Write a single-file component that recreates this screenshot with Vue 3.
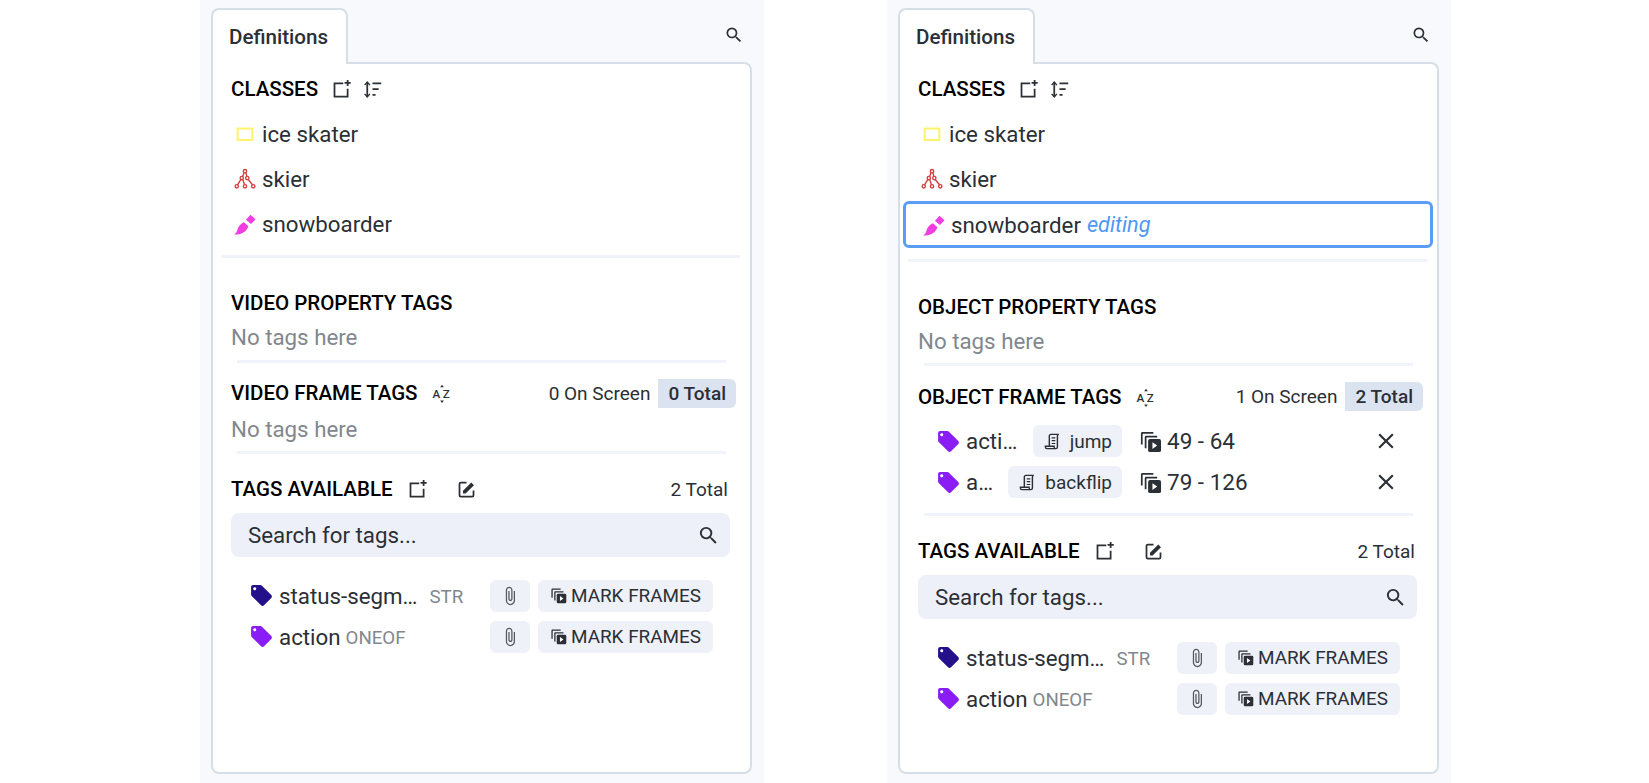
<script setup>
const panels = [
  {
    id: 'video', editing: false, propTitle: 'VIDEO PROPERTY TAGS', frameTitle: 'VIDEO FRAME TAGS',
    onScreen: '0 On Screen', total: '0 Total', frameTags: [],
  },
  {
    id: 'object', editing: true, propTitle: 'OBJECT PROPERTY TAGS', frameTitle: 'OBJECT FRAME TAGS',
    onScreen: '1 On Screen', total: '2 Total',
    frameTags: [
      { name: 'acti…', value: 'jump', range: '49 - 64' },
      { name: 'a…', value: 'backflip', range: '79 - 126' },
    ],
  },
]
const available = [
  { name: 'status-segm…', type: 'STR', color: '#24108a', wide: true },
  { name: 'action', type: 'ONEOF', color: '#8a1cf5', wide: false },
]
const tagPath = 'M21.41 11.58l-9-9C12.05 2.22 11.55 2 11 2H4c-1.1 0-2 .9-2 2v7c0 .55.22 1.05.59 1.42l9 9c.36.36.86.58 1.41.58.55 0 1.05-.22 1.41-.59l7-7c.37-.36.59-.86.59-1.41 0-.55-.23-1.06-.59-1.42zM5.5 7C4.67 7 4 6.33 4 5.5S4.67 4 5.5 4 7 4.67 7 5.5 6.33 7 5.5 7z'
const searchPath = 'M15.5 14h-.79l-.28-.27A6.471 6.471 0 0 0 16 9.5 6.5 6.5 0 1 0 9.5 16c1.61 0 3.09-.59 4.23-1.57l.27.28v.79l5 4.99L20.49 19l-4.99-5zm-6 0C7.01 14 5 11.99 5 9.5S7.01 5 9.5 5 14 7.01 14 9.5 11.99 14 9.5 14z'
const clipPath = 'M16.5 6v11.5c0 2.21-1.79 4-4 4s-4-1.79-4-4V5c0-1.38 1.12-2.5 2.5-2.5s2.5 1.12 2.5 2.5v10.5c0 .55-.45 1-1 1s-1-.45-1-1V6H10v9.5c0 1.38 1.12 2.5 2.5 2.5s2.5-1.12 2.5-2.5V5c0-2.21-1.79-4-4-4S7 2.79 7 5v12.5c0 3.04 2.46 5.5 5.5 5.5s5.5-2.46 5.5-5.5V6h-1.5z'
const closePath = 'M19 6.41L17.59 5 12 10.59 6.41 5 5 6.41 10.59 12 5 17.59 6.41 19 12 13.41 17.59 19 19 17.59 13.41 12z'
</script>

<template>
  <div class="page">
    <section v-for="p in panels" :key="p.id" class="col" :class="'col-' + p.id">
      <div class="tabs">
        <div class="tab">Definitions</div>
        <svg class="top-search" viewBox="0 0 24 24"><path :d="searchPath" /></svg>
      </div>
      <div class="panel">
        <div class="head classes-head">
          <span class="title">CLASSES</span>
          <svg class="ic add" viewBox="0 0 24 24" fill="none" stroke="#2b2f36" stroke-width="2">
            <path d="M14 5H4v15h15V11" /><path d="M19 1v7M15.5 4.5h7" />
          </svg>
          <svg class="ic sort" viewBox="0 0 24 24" fill="none" stroke="#2b2f36" stroke-width="2">
            <path d="M6 4v16" /><path d="M3 7l3-3.5L9 7M3 17l3 3.5L9 17" stroke-width="1.6" /><path d="M12 5h10M12 11.500h7M12 18h3.500" />
          </svg>
        </div>

        <div class="class-row">
          <svg class="cls" viewBox="0 0 24 24" fill="none" stroke="#fdf36b" stroke-width="2.2"><rect x="4" y="6" width="16" height="12.500" /></svg>
          <span>ice skater</span>
        </div>
        <div class="class-row">
          <svg class="cls" viewBox="0 0 24 24" fill="none" stroke="#d2403f" stroke-width="1.500">
            <circle cx="12" cy="3.500" r="1.800" /><circle cx="8.500" cy="11" r="1.800" /><circle cx="14.500" cy="11" r="1.800" />
            <circle cx="3" cy="20" r="1.800" /><circle cx="12" cy="20" r="1.800" /><circle cx="21" cy="20" r="1.800" />
            <path d="M11 5.200L9.300 9.300M13 5.200l1 4M7.500 12.500L3.800 18.300M9.500 12.500l2 5.700M15.500 12.500l4.700 5.800" />
          </svg>
          <span>skier</span>
        </div>
        <div class="class-row" :class="{ editing: p.editing }">
          <svg class="cls" viewBox="0 0 24 24" fill="#f03ee0">
            <path d="M0 23.500c2.500-1.200 3.300-3.300 3.800-5.500.8-3.400 3.500-6.500 7-8l5 4.500c-1.300 4-4.500 7-8.300 8-2.500.7-4.800 1-7.500 1z" />
            <path d="M18 2l5.500 4.700-5 5.300-5.500-4.700z" />
          </svg>
          <span>snowboarder</span>
          <em v-if="p.editing" class="edit-label">editing</em>
        </div>
        <div class="rule rule-wide"></div>

        <div class="head prop-head"><span class="title">{{ p.propTitle }}</span></div>
        <div class="empty first-empty">No tags here</div>
        <div class="rule"></div>

        <div class="head frame-head">
          <span class="title">{{ p.frameTitle }}</span>
          <svg class="ic az" viewBox="0 0 24 24" fill="#2b2f36">
            <text x="0.500" y="17.500" font-size="14" font-weight="500" font-family="Roboto, sans-serif">A</text>
            <text x="13" y="17.500" font-size="14" font-weight="500" font-family="Roboto, sans-serif">Z</text>
            <path d="M12 2l2.200 3h-4.400zM12 24l2.200-3h-4.400z" />
          </svg>
          <span class="spacer"></span>
          <span class="count">{{ p.onScreen }}</span>
          <span class="pill">{{ p.total }}</span>
        </div>

        <div v-if="!p.frameTags.length" class="empty second-empty">No tags here</div>
        <div v-else class="frame-list">
          <div v-for="t in p.frameTags" :key="t.value" class="frame-row">
            <div class="frame-left">
              <svg class="tag" viewBox="0 0 24 24" fill="#8a1cf5"><path :d="tagPath" /></svg>
              <span class="name">{{ t.name }}</span>
              <span class="chip">
                <svg class="ic scroll" viewBox="0 0 24 24" fill="none" stroke="#2b2f36" stroke-width="1.800">
                  <path d="M8 19V5c0-1 .7-2 2-2h10c-1 0-1.800 1-1.800 2v14c0 1.200-.8 2-2 2H5c-1.200 0-2-.8-2-2v-1h11v1c0 1.200.8 2 2 2" />
                  <path d="M11 7.500h4.500M11 11h4.500M11 14.500h4.500" stroke-width="1.500" />
                </svg>
                {{ t.value }}
              </span>
            </div>
            <svg class="frames big" viewBox="0 0 24 24">
              <path d="M2 15V3.500C2 2.700 2.700 2 3.500 2H15v1.800H3.800V15zM6 19V7.500C6 6.700 6.700 6 7.500 6H19v1.800H7.800V19z" fill="#2b2f36" />
              <rect x="9.500" y="9.500" width="13.500" height="13.500" rx="2" fill="#2b2f36" /><path d="M14 12.700l5 3.600-5 3.600z" fill="#fff" />
            </svg>
            <span class="range">{{ t.range }}</span>
            <svg class="close" viewBox="0 0 24 24"><path :d="closePath" /></svg>
          </div>
        </div>
        <div class="rule" :class="{ 'rule-tags': p.frameTags.length }"></div>

        <div class="head avail-head">
          <span class="title">TAGS AVAILABLE</span>
          <svg class="ic add" viewBox="0 0 24 24" fill="none" stroke="#2b2f36" stroke-width="2">
            <path d="M14 5H4v15h15V11" /><path d="M19 1v7M15.5 4.500h7" />
          </svg>
          <svg class="ic edit" viewBox="0 0 24 24" fill="none" stroke="#2b2f36" stroke-width="2">
            <path d="M12 4H5.500C4.500 4 4 4.500 4 5.500v13c0 1 .5 1.500 1.500 1.500h13c1 0 1.500-.5 1.500-1.500V13" />
            <path d="M8 16.500v-3L17.500 4l3 3-9.500 9.500z" fill="#2b2f36" stroke="none" />
          </svg>
          <span class="spacer"></span>
          <span class="count avail-count">2 Total</span>
        </div>

        <div class="search">
          <span>Search for tags...</span>
          <svg class="search-ic" viewBox="0 0 24 24"><path :d="searchPath" /></svg>
        </div>

        <div class="avail-list">
          <div v-for="a in available" :key="a.name" class="avail-row">
            <svg class="tag" viewBox="0 0 24 24" :fill="a.color"><path :d="tagPath" /></svg>
            <span class="name">{{ a.name }}</span>
            <span class="type" :class="{ 'type-wide': a.wide }">{{ a.type }}</span>
            <span class="spacer"></span>
            <span class="btn clip"><svg viewBox="0 0 24 24"><path :d="clipPath" /></svg></span>
            <span class="btn mark">
              <svg class="frames" viewBox="0 0 24 24">
                <path d="M2 15V3.500C2 2.700 2.700 2 3.500 2H15v1.800H3.800V15zM6 19V7.500C6 6.700 6.700 6 7.500 6H19v1.800H7.800V19z" fill="#2b2f36" />
                <rect x="9.500" y="9.500" width="13.500" height="13.500" rx="2" fill="#2b2f36" /><path d="M14 12.700l5 3.600-5 3.600z" fill="#fff" />
              </svg>
              MARK FRAMES
            </span>
          </div>
        </div>
      </div>
    </section>
  </div>
</template>

<style>
html, body { margin: 0; background: #fff; }
</style>

<style scoped>
.page {
  width: 1649px; height: 783px; box-sizing: border-box; overflow: hidden;
  display: flex; gap: 123px; padding-left: 200px;
  font-family: Roboto, "Liberation Sans", sans-serif; color: #2b2f36; background: #fff;
}
.col {
  width: 564px; height: 783px; box-sizing: border-box; background: #f7f9fd;
  padding: 8px 12px 9px 11px; display: flex; flex-direction: column;
}
.tabs { display: flex; align-items: flex-start; justify-content: space-between; height: 54px; position: relative; z-index: 1; }
.tab {
  width: 137px; height: 56px; box-sizing: border-box; background: #fff;
  border: 2px solid #d6dee7; border-bottom: 0; border-radius: 8px 8px 0 0;
  font-size: 20.600px; font-weight: 500; line-height: 54px; text-align: center; padding-right: 2px;
}
.top-search { width: 20px; height: 20px; margin: 17px 8px 0 0; fill: #2b2f36; }
.panel {
  flex: 1; min-height: 0; background: #fff; border: 2px solid #d6dee7; border-radius: 0 8px 8px 8px;
  display: flex; flex-direction: column;
}
.head { display: flex; align-items: center; padding: 0 14px 0 18px; height: 26px; flex: none; }
.title { font-size: 20.500px; font-weight: 500; color: #000; white-space: nowrap; }
.classes-head { margin-top: 12px; margin-bottom: 10px; }
.ic { width: 21px; height: 21px; flex: none; }
.classes-head .add { margin-left: 13px; }
.classes-head .sort { margin-left: 10px; }
.class-row {
  display: flex; align-items: center; height: 44.7px; box-sizing: border-box; margin: 0 5px;
  padding-left: 13px; font-size: 22.300px; border: 3px solid transparent; border-radius: 6px; flex: none;
}
.class-row.editing { border-color: #5b9cf5; height: 46.500px; margin: 0 4px 0 3px; padding-left: 17px; }
.cls { width: 22px; height: 22px; margin-right: 6px; flex: none; }
.edit-label { color: #4e97f5; margin-left: 6px; font-size: 21.700px; }
.rule { height: 3px; background: #f0f3f9; margin: 9.500px 24px 0; flex: none; }
.rule.rule-wide { margin: 9px 10px 0 8px; }
.editing + .rule.rule-wide { margin-top: 11px; }
.rule.rule-tags { margin-top: 15px; }
.prop-head { margin-top: 32px; }
.empty { font-size: 22.300px; line-height: 26px; color: #82878e; padding-left: 18px; height: 26px; flex: none; }
.first-empty { margin-top: 8px; }
.second-empty { margin-top: 8px; }
.frame-head { margin-top: 16px; height: 29px; }
.az { width: 20px; height: 20px; margin-left: 14px; }
.spacer { flex: 1; }
.count { font-size: 19px; }
.pill {
  background: #dbe3f0; border-radius: 0 6px 6px 0; font-size: 19px; font-weight: 500; height: 29px; line-height: 29px;
  padding: 0 10px; margin-left: 8px;
}
.frame-list { display: flex; flex-direction: column; gap: 9px; margin-top: 14px; }
.frame-row { display: flex; align-items: center; height: 32px; padding-left: 36px; }
.frame-left { display: flex; align-items: center; width: 186px; flex: none; }
.tag { width: 25px; height: 25px; flex: none; }
.name { font-size: 22.300px; margin-left: 5px; white-space: nowrap; }
.frame-left .name { flex: 1; }
.chip {
  display: inline-flex; align-items: center; gap: 8px; height: 32px; padding: 0 10px;
  background: #eef1f8; border-radius: 6px; font-size: 19px; color: #2b2f36;
}
.scroll { width: 19px; height: 19px; }
.frames { width: 17px; height: 17px; flex: none; }
.frames.big { width: 23px; height: 23px; margin-left: 17px; }
.range { font-size: 22.500px; margin-left: 5px; white-space: nowrap; }
.close { width: 26px; height: 26px; margin-left: auto; margin-right: 38px; fill: #2b2f36; }
.avail-head { margin-top: 22px; }
.avail-head .add { margin-left: 14px; }
.avail-head .edit { margin-left: 28px; }
.avail-count { margin-right: 8px; }
.search {
  margin: 11px 20px 0 18px; height: 44px; background: #edf0f8; border-radius: 8px; flex: none;
  display: flex; align-items: center; justify-content: space-between; padding: 0 10px 0 17px; font-size: 22.300px;
}
.search-ic { width: 23px; height: 23px; fill: #2b2f36; }
.avail-list { display: flex; flex-direction: column; gap: 9px; margin-top: 22.500px; }
.avail-row { display: flex; align-items: center; height: 32px; padding: 0 37px 0 36px; }
.type { font-size: 18.700px; color: #82878e; margin-left: 5px; margin-top: 3px; }
.type-wide { margin-left: 12px; }
.btn {
  display: inline-flex; align-items: center; justify-content: center; height: 32px; background: #eef1f8; border-radius: 6px;
  font-size: 18.900px; flex: none;
}
.clip { width: 40px; }
.clip svg { width: 20px; height: 20px; fill: #55595f; }
.mark { width: 175px; margin-left: 8px; gap: 4px; }
</style>
